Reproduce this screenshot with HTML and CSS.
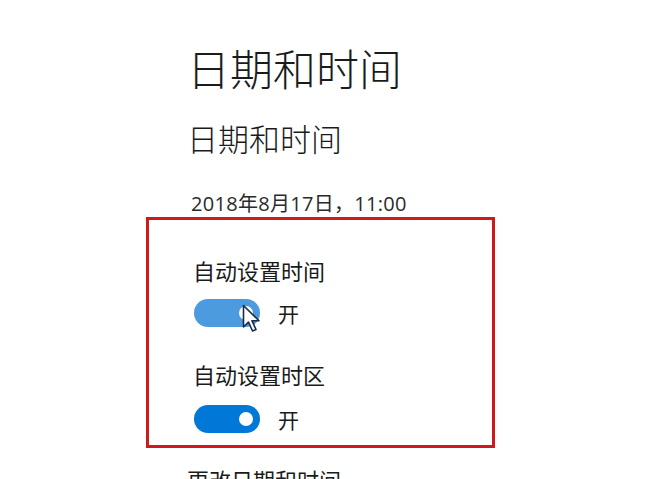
FILE: index.html
```html
<!DOCTYPE html>
<html lang="zh-CN">
<head>
    <meta charset="UTF-8">
    <title>日期和时间</title>
    <link rel="stylesheet" href="styles.css">
</head>
<body>

    <div class="page">
        <h1 class="title">日期和时间</h1>
        <h2 class="subtitle">日期和时间</h2>
        <p class="now">2018年8月17日，11:00</p>

        <!-- 红框标注 -->
        <div class="mark">
            <p class="label">自动设置时间</p>
            <div class="switch-row">
                <span class="switch hover"><span class="knob"></span></span>
                <span class="state">开</span>
                <svg class="cursor" width="20" height="30" viewBox="0 0 20 30">
                    <path d="M1.5 1.5 L1.5 23 L6.5 18 L10.5 27 L14 25.5 L10 16.8 L17 16.8 Z" fill="#fff" stroke="#1c2b44" stroke-width="1.6" stroke-linejoin="round"/>
                </svg>
            </div>

            <p class="label">自动设置时区</p>
            <div class="switch-row second">
                <span class="switch"><span class="knob"></span></span>
                <span class="state">开</span>
            </div>
        </div>

        <p class="label next">更改日期和时间</p>
    </div>

</body>
</html>
```

FILE: styles.css
```css
body {
    font-family: "Noto Sans CJK SC", "Noto Sans", sans-serif;
    background-color: #fff;
    color: #1b1b1b;
    margin: 0;
    overflow: hidden;
}

.page {
    padding: 38px 0 0 187px;
}

.title {
    font-size: 43px;
    font-weight: 300;
    line-height: 58px;
    margin: 0;
}

.subtitle {
    font-size: 31px;
    font-weight: 300;
    line-height: 40px;
    margin: 22px 0 0;
}

.now {
    font-family: "Open Sans", "Noto Sans CJK SC", sans-serif;
    font-size: 20px;
    letter-spacing: 0.3px;
    line-height: 24px;
    margin: 34px 0 0 4px;
    color: #2a2a2a;
}

.mark {
    width: 349px;
    margin: 1px 0 0 -41px;
    padding: 36px 0 13px 44px;
    border: 3px solid #d1181b;
    box-sizing: border-box;
    height: 231px;
}

.label {
    font-size: 22px;
    line-height: 28px;
    margin: 0;
    color: #1b1b1b;
}

.switch-row {
    position: relative;
    display: flex;
    align-items: center;
    gap: 18px;
    margin: 15px 0 33px 1px;
}

.switch-row.second {
    margin: 17px 0 0 1px;
}

.switch {
    display: flex;
    align-items: center;
    justify-content: flex-end;
    width: 66px;
    height: 28px;
    padding-right: 7px;
    border-radius: 14px;
    background-color: #0078d7;
    box-sizing: border-box;
}

.switch.hover {
    background-color: #4c9bdf;
}

.knob {
    width: 14px;
    height: 14px;
    border-radius: 50%;
    background-color: #fff;
}

.state {
    font-size: 21px;
    line-height: 28px;
}

.cursor {
    position: absolute;
    left: 48px;
    top: 5px;
}

.next {
    margin-top: 17px;
}
```
